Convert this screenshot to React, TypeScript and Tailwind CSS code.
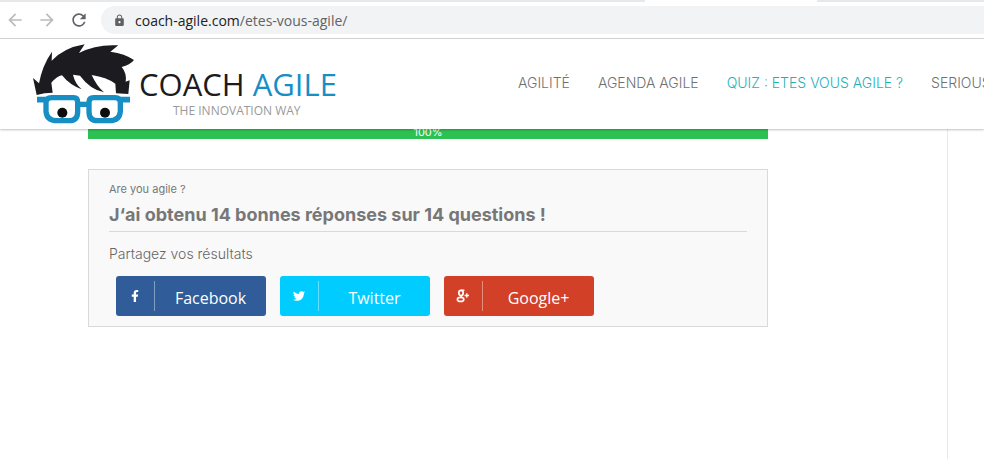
import React from "react";
import { FaFacebookF, FaTwitter } from "react-icons/fa";
import { MdArrowBack, MdArrowForward, MdLock, MdRefresh } from "react-icons/md";

function BrowserBar() {
  return (
    <div className="border-b border-[#d5d6d8] bg-white">
      <div className="flex h-[2px] bg-[#e7e8ea]">
        <div className="ml-[645px] w-[172px] bg-white" />
      </div>
      <div className="flex items-center pt-1 pb-1 pl-[5px]">
        <button type="button" aria-label="Back" className="mr-3 text-[#babcbe]">
          <MdArrowBack size={20} />
        </button>
        <button type="button" aria-label="Forward" className="mr-3 text-[#babcbe]">
          <MdArrowForward size={20} />
        </button>
        <button type="button" aria-label="Reload" className="mr-3 text-[#5f6368]">
          <MdRefresh size={20} />
        </button>
        <div className="flex h-7 flex-1 items-center rounded-l-full bg-[#f1f3f4] pl-3 font-['Open_Sans',sans-serif] text-[14px] text-[#5f6368]">
          <MdLock size={13} className="mr-[9px]" />
          <span className="text-[#202124]">coach-agile.com</span>
          <span>/etes-vous-agile/</span>
        </div>
      </div>
    </div>
  );
}

function Mascot() {
  return (
    <svg viewBox="0 0 360 285" className="h-[95px] w-[120px] shrink-0" aria-hidden="true">
      <path
        fill="#1c1b20"
        d="M35 168 L24 117 L42 133 Q52 79 81 38 L80 65 Q118 26 179 16 L162 42 Q213 15 280 19 L256 38 Q300 44 327 63 Q315 78 290 84 Q306 103 302 128 L314 124 L310 165 L273 163 L271 134 Q245 115 200 108 Q215 141 237 160 Q195 151 165 110 L144 107 Q150 134 170 151 Q134 138 111 109 Q96 112 79 131 L83 161 Q58 161 35 168Z"
      />
      <g fill="none" stroke="#178fc5" strokeWidth="16">
        <path d="M80 176 H146 Q158 176 158 190 V218 Q158 245 132 245 H96 Q65 245 63 217 V192 Q63 176 80 176Z" />
        <path d="M206 176 H270 Q286 176 286 192 V217 Q284 245 253 245 H218 Q192 245 192 218 V190 Q192 176 206 176Z" />
        <path d="M36 182 H66 M284 182 H315" strokeWidth="17" />
        <path d="M162 196 H189" />
      </g>
      <circle cx="112" cy="221" r="15" fill="#0c0c0e" />
      <circle cx="240" cy="221" r="15" fill="#0c0c0e" />
    </svg>
  );
}

const links = ["AGILITÉ", "AGENDA AGILE", "QUIZ : ETES VOUS AGILE ?", "SERIOUS"];

function SiteHeader() {
  return (
    <header className="relative z-10 flex h-[90px] items-start bg-white pl-[25px] shadow-[0_1px_2px_rgba(0,0,0,0.25)]">
      <a href="#accueil" className="flex w-[313px] shrink-0">
        <Mascot />
        <span className="-ml-[6px] pt-[26px] font-['Open_Sans',sans-serif] whitespace-nowrap">
          <span className="block text-[31px] leading-[38px] text-[#1c1b20]">
            COACH <span className="text-[#178fc5]">AGILE</span>
          </span>
          <span className="block pl-[34px] text-[12px] leading-4 text-[#999999]">THE INNOVATION WAY</span>
        </span>
      </a>
      <nav className="ml-[180px] flex gap-7 pt-[34px] font-[Inter,sans-serif] text-[14px] leading-5 font-light whitespace-nowrap text-[#707070]">
        {links.map((label, i) => (
          <a key={label} href="#menu" className={i === 2 ? "text-[#1fb0b8]" : ""}>
            {label}
          </a>
        ))}
      </nav>
    </header>
  );
}

function GooglePlusIcon() {
  return (
    <svg viewBox="0 0 14 14" className="size-[14px]" fill="none" stroke="currentColor" aria-hidden="true">
      <ellipse cx="5" cy="4" rx="2.2" ry="2.6" strokeWidth="1.7" />
      <path d="M5 1.2H8.4M5.6 6.4Q4.4 7.4 6.4 8.7" strokeWidth="1.4" />
      <ellipse cx="4.6" cy="10.4" rx="3.2" ry="2" strokeWidth="1.6" />
      <path d="M8.6 6.5H13M10.8 4.3V8.7" strokeWidth="1.3" />
    </svg>
  );
}

const networks = [
  { name: "Facebook", color: "bg-[#305c99]", icon: <FaFacebookF size={12} /> },
  { name: "Twitter", color: "bg-[#00ccff]", icon: <FaTwitter size={12} /> },
  { name: "Google+", color: "bg-[#d34028]", icon: <GooglePlusIcon /> },
];

function ShareCard() {
  return (
    <section className="mt-[30px] border border-[#d9d9d9] bg-[#f9f9f9] px-5 pt-[9px] pb-[10px] text-[#777777]">
      <p className="text-[11px] leading-5">Are you agile ?</p>
      <h2 className="border-b border-[#d9d9d9] pt-[6px] pb-[6px] text-[18px] leading-5 font-bold">
        J‘ai obtenu 14 bonnes réponses sur 14 questions !
      </h2>
      <p className="pt-3 text-[14px] leading-5 font-light text-[#666666]">Partagez vos résultats</p>
      <div className="flex flex-wrap gap-[14px] pt-3 pl-[7px]">
        {networks.map((n) => (
          <button
            key={n.name}
            type="button"
            className={`flex h-10 w-[150px] items-center rounded-[3px] font-['Open_Sans',sans-serif] text-[16px] text-white ${n.color}`}
          >
            <span className="flex h-[30px] w-[39px] items-center justify-center border-r border-white/40">
              {n.icon}
            </span>
            <span className="flex-1 pt-1">{n.name}</span>
          </button>
        ))}
      </div>
    </section>
  );
}

export default function App() {
  return (
    <div className="flex min-h-screen flex-col overflow-x-hidden bg-white font-[Inter,sans-serif]">
      <BrowserBar />
      <SiteHeader />
      <div className="flex flex-1">
        <main className="flex-1 pr-[179px] pl-[88px]">
          <div className="-mt-1 bg-[#2dc153] text-center text-[11px] leading-[14px] text-white">100%</div>
          <ShareCard />
        </main>
        <aside className="w-[37px] border-l border-[#e9e9e9]" />
      </div>
    </div>
  );
}
